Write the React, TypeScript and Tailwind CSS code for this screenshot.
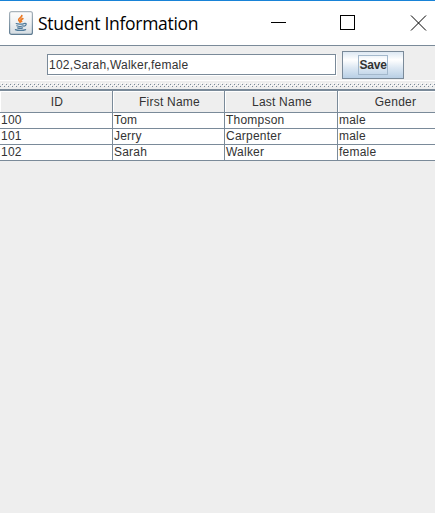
import React from "react";

const rows: string[][] = [
  ["100", "Tom", "Thompson", "male"],
  ["101", "Jerry", "Carpenter", "male"],
  ["102", "Sarah", "Walker", "female"],
];
const headers = ["ID", "First Name", "Last Name", "Gender"];

function JavaIcon() {
  return (
    <svg width="24" height="24" viewBox="0 0 24 24" className="shrink-0">
      <defs>
        <linearGradient id="tile" x1="0" y1="0" x2="0" y2="1">
          <stop offset="0" stopColor="#fdfdfd" />
          <stop offset="0.5" stopColor="#eef1f3" />
          <stop offset="1" stopColor="#d3dbe1" />
        </linearGradient>
        <linearGradient id="edge" x1="0" y1="0" x2="0" y2="1">
          <stop offset="0" stopColor="#a9b4bc" />
          <stop offset="1" stopColor="#5f7c92" />
        </linearGradient>
      </defs>
      <rect x="0.6" y="0.6" width="22.8" height="22.8" rx="2" fill="url(#tile)" stroke="url(#edge)" strokeWidth="1.2" />
      <g fill="none" strokeLinecap="round">
        <path d="M12.8 4.6C13 6.6 8.8 7.4 9.8 9.2C10.3 10 10.9 10.4 11.1 11.2M13.8 7.6C11.6 8.4 11.4 9.2 12.6 10.4" stroke="#ec7a25" strokeWidth="1.8" />
        <path d="M7.2 12.6C8.6 13.4 13.4 13.3 15 12.6M7.8 14.8C9.4 15.6 12.6 15.5 14.2 14.8M8.6 16.9C10 17.5 12.2 17.5 13.6 16.9M15.6 12.4C18 12 17.6 14.4 15 15.2" stroke="#507b9b" strokeWidth="1.2" />
        <path d="M6.4 18.6C8.4 19.7 14.4 19.7 16.6 18.6" stroke="#507b9b" strokeWidth="1.2" />
      </g>
    </svg>
  );
}

export default function App() {
  return (
    <div className="flex h-[513px] w-[435px] flex-col overflow-hidden bg-[#eeeeee] font-['Liberation_Sans',Arial,sans-serif] text-[12px] text-[#333333]">
      <header className="flex h-[46px] shrink-0 items-center border-t border-b border-t-[#1883d7] border-b-[#7a8a99] bg-white pl-[9px] text-black">
        <JavaIcon />
        <h1 className="ml-[5px] w-[232px] whitespace-nowrap font-['Open_Sans','Noto_Sans',sans-serif] text-[17.5px] leading-[24px] tracking-[-0.28px]">Student Information</h1>
        <svg width="165" height="24" viewBox="0 0 165 24" className="shrink-0" fill="none" stroke="black" shapeRendering="crispEdges">
          <path d="M1 11.5H16M70.5 4.5H84.5V18.5H70.5Z" />
          <path d="M141 4.5L156 19.5M156 4.5L141 19.5" shapeRendering="auto" />
        </svg>
      </header>
      <div className="flex h-[35px] shrink-0 items-start border-b border-white pl-[47px] pt-[5px]">
        <div className="mt-[3px] h-[21px] w-[289px] border border-[#7a8a99] bg-white pl-px leading-[20px] tracking-[0.22px] whitespace-nowrap shadow-[1px_1px_0_white]">102,Sarah,Walker,female</div>
        <button className="ml-[6px] flex h-[28px] w-[62px] items-center justify-center border border-[#7a8a99] bg-[linear-gradient(to_bottom,#dde8f3_0%,white_30%,#dde8f3_60%,#b8cfe5_100%)] font-bold">
          <span className="h-[20px] w-[30px] border border-[#a3b8cc] text-center leading-[18px] tracking-[-0.2px]">Save</span>
        </button>
      </div>
      <div className="h-[8px] shrink-0">
        <svg width="435" height="8" className="block" shapeRendering="crispEdges">
          <defs>
            <pattern id="bumps" width="4" height="4" patternUnits="userSpaceOnUse" y="2">
              <path d="M2 1h1v1h-1zM0 3h1v1h-1z" fill="#7a8a99" />
              <path d="M1 0h1v1h-1zM3 2h1v1h-1z" fill="white" />
            </pattern>
          </defs>
          <rect y="2" width="435" height="4" fill="url(#bumps)" />
        </svg>
      </div>
      <div className="grid w-[452px] shrink-0 grid-cols-[113px_112px_113px_114px] border-t-2 border-[#7a8a99] tracking-[0.22px]">
        {headers.map((h) => (
          <div key={h} className="h-[22px] border-r border-b border-[#7a8a99]">
            <div className="h-full border-t border-l border-white pl-px text-center leading-[21px]">{h}</div>
          </div>
        ))}
        {rows.flat().map((v, i) => (
          <div key={i} className="h-[16px] border-r border-b border-[#7a8a99] bg-white pl-px leading-[15px] whitespace-nowrap">{v}</div>
        ))}
      </div>
    </div>
  );
}
